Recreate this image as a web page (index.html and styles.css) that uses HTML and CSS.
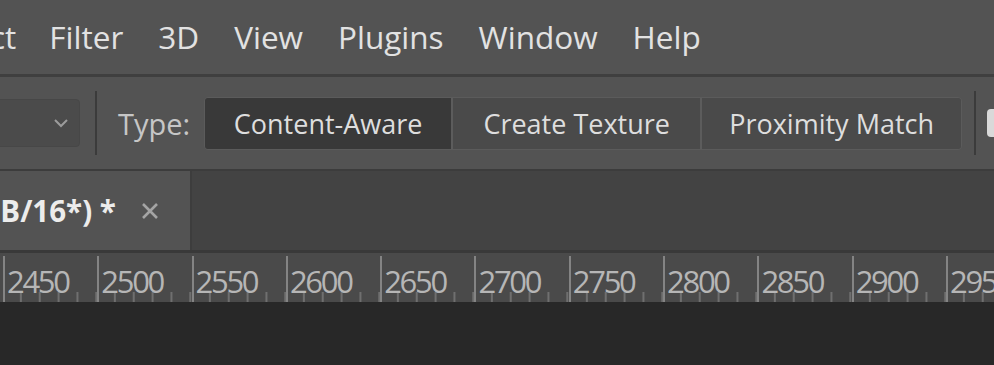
FILE: index.html
```html
<!DOCTYPE html>
<html lang="en">
<head>
  <meta charset="UTF-8" />
  <meta name="viewport" content="width=device-width, initial-scale=1.0" />
  <title>Photoshop - Content-Aware Fill</title>
  <link rel="stylesheet" href="styles.css">
</head>
<body>

  <nav class="menubar">
    <a class="menu-item menu-first">ct</a>
    <a class="menu-item">Filter</a>
    <a class="menu-item">3D</a>
    <a class="menu-item">View</a>
    <a class="menu-item">Plugins</a>
    <a class="menu-item">Window</a>
    <a class="menu-item">Help</a>
  </nav>

  <section class="options">
    <div class="dropdown">
      <svg class="chevron" width="16" height="10" viewBox="0 0 16 10">
        <polyline points="2,2 8,8 14,2" fill="none" stroke="#9c9c9c" stroke-width="2" />
      </svg>
    </div>
    <div class="sep"></div>
    <span class="type-label">Type:</span>
    <div class="segmented">
      <button class="seg seg-aware active">Content-Aware</button>
      <button class="seg seg-texture">Create Texture</button>
      <button class="seg seg-match">Proximity Match</button>
    </div>
    <div class="sep sep-right"></div>
    <div class="checkbox"></div>
  </section>

  <div class="tabs">
    <div class="tab">
      <span class="tab-title">GB/16*) *</span>
      <svg class="tab-close" width="18" height="18" viewBox="0 0 18 18">
        <path d="M2 2 L16 16 M16 2 L2 16" stroke="#a4a4a4" stroke-width="2.6" />
      </svg>
    </div>
  </div>

  <div class="ruler">
    <span class="mark">2450</span>
    <span class="mark">2500</span>
    <span class="mark">2550</span>
    <span class="mark">2600</span>
    <span class="mark">2650</span>
    <span class="mark">2700</span>
    <span class="mark">2750</span>
    <span class="mark">2800</span>
    <span class="mark">2850</span>
    <span class="mark">2900</span>
    <span class="mark">2950</span>
  </div>

  <main class="canvas"></main>

</body>
</html>
```

FILE: styles.css
```css
body {
  margin: 0;
  font-family: "Open Sans", "Noto Sans", sans-serif;
  background-color: #282828;
  overflow: hidden;
  width: 994px;
  height: 365px;
}

/* menu */
.menubar {
  height: 74px;
  background-color: #535353;
  border-bottom: 3px solid #3f3f3f;
  display: flex;
  align-items: center;
  gap: 35px;
  white-space: nowrap;
  overflow: hidden;
}

.menu-item {
  color: #e2e2e2;
  font-size: 31.5px;
  text-decoration: none;
  line-height: 1;
}

.menu-first {
  margin-left: -10px;
  margin-right: -2px;
}

/* options bar */
.options {
  height: 92px;
  background-color: #535353;
  border-bottom: 2px solid #3c3c3c;
  display: flex;
  align-items: center;
  white-space: nowrap;
  overflow: hidden;
}

.dropdown {
  margin-left: -10px;
  width: 90px;
  height: 48px;
  box-sizing: border-box;
  background-color: #4b4b4b;
  border: 1px solid #474747;
  border-radius: 4px;
  display: flex;
  align-items: center;
  justify-content: flex-end;
  padding-right: 10px;
  flex-shrink: 0;
}

.sep {
  width: 2px;
  height: 64px;
  background-color: #3b3b3b;
  margin-left: 15px;
  flex-shrink: 0;
}

.sep-right {
  margin-left: 12px;
}

.type-label {
  color: #c6c6c6;
  font-size: 29px;
  margin-left: 21px;
}

.segmented {
  display: flex;
  margin-left: 14px;
  border: 1px solid #5b5b5b;
  border-radius: 4px;
  overflow: hidden;
  height: 53px;
  box-sizing: border-box;
  flex-shrink: 0;
}

.seg {
  font-family: inherit;
  font-size: 27px;
  color: #dedede;
  background-color: #4a4a4a;
  border: none;
  padding: 0;
  margin: 0;
  box-sizing: content-box;
}

.seg + .seg {
  border-left: 2px solid #5c5c5c;
}

.seg.active {
  background-color: #393939;
}

.seg-aware { width: 246px; }
.seg-texture { width: 247px; }
.seg-match { width: 259px; }

.checkbox {
  margin-left: 11px;
  width: 14px;
  height: 28px;
  flex-shrink: 0;
  background-color: #d9d9d9;
  border-radius: 4px;
}

/* document tab */
.tabs {
  height: 79px;
  background-color: #434343;
  border-bottom: 3px solid #393939;
  display: flex;
}

.tab {
  width: 190px;
  background-color: #535353;
  border-right: 2px solid #3d3d3d;
  display: flex;
  align-items: center;
  overflow: hidden;
  white-space: nowrap;
}

.tab-title {
  color: #ececec;
  font-size: 29.5px;
  font-weight: bold;
  margin-left: -21px;
}

.tab-close {
  margin-left: 25px;
  flex-shrink: 0;
}

/* ruler */
.ruler {
  height: 49px;
  background-color: #4a4a4a;
  display: flex;
  padding-left: 3px;
  overflow: hidden;
}

.mark {
  flex: 0 0 94.3px;
  box-sizing: border-box;
  border-left: 2px solid #848484;
  margin-top: 3px;
  padding-left: 2px;
  color: #b6b6b6;
  font-size: 31px;
  letter-spacing: -2.3px;
  line-height: 50px;
  background-image: linear-gradient(to right, transparent 16.9px, #6f6f6f 16.9px, #6f6f6f 18.9px, transparent 18.9px);
  background-size: 18.86px 10px;
  background-repeat: repeat-x;
  background-position: -2px bottom;
}

.canvas {
  height: 63px;
  background-color: #282828;
}
```
